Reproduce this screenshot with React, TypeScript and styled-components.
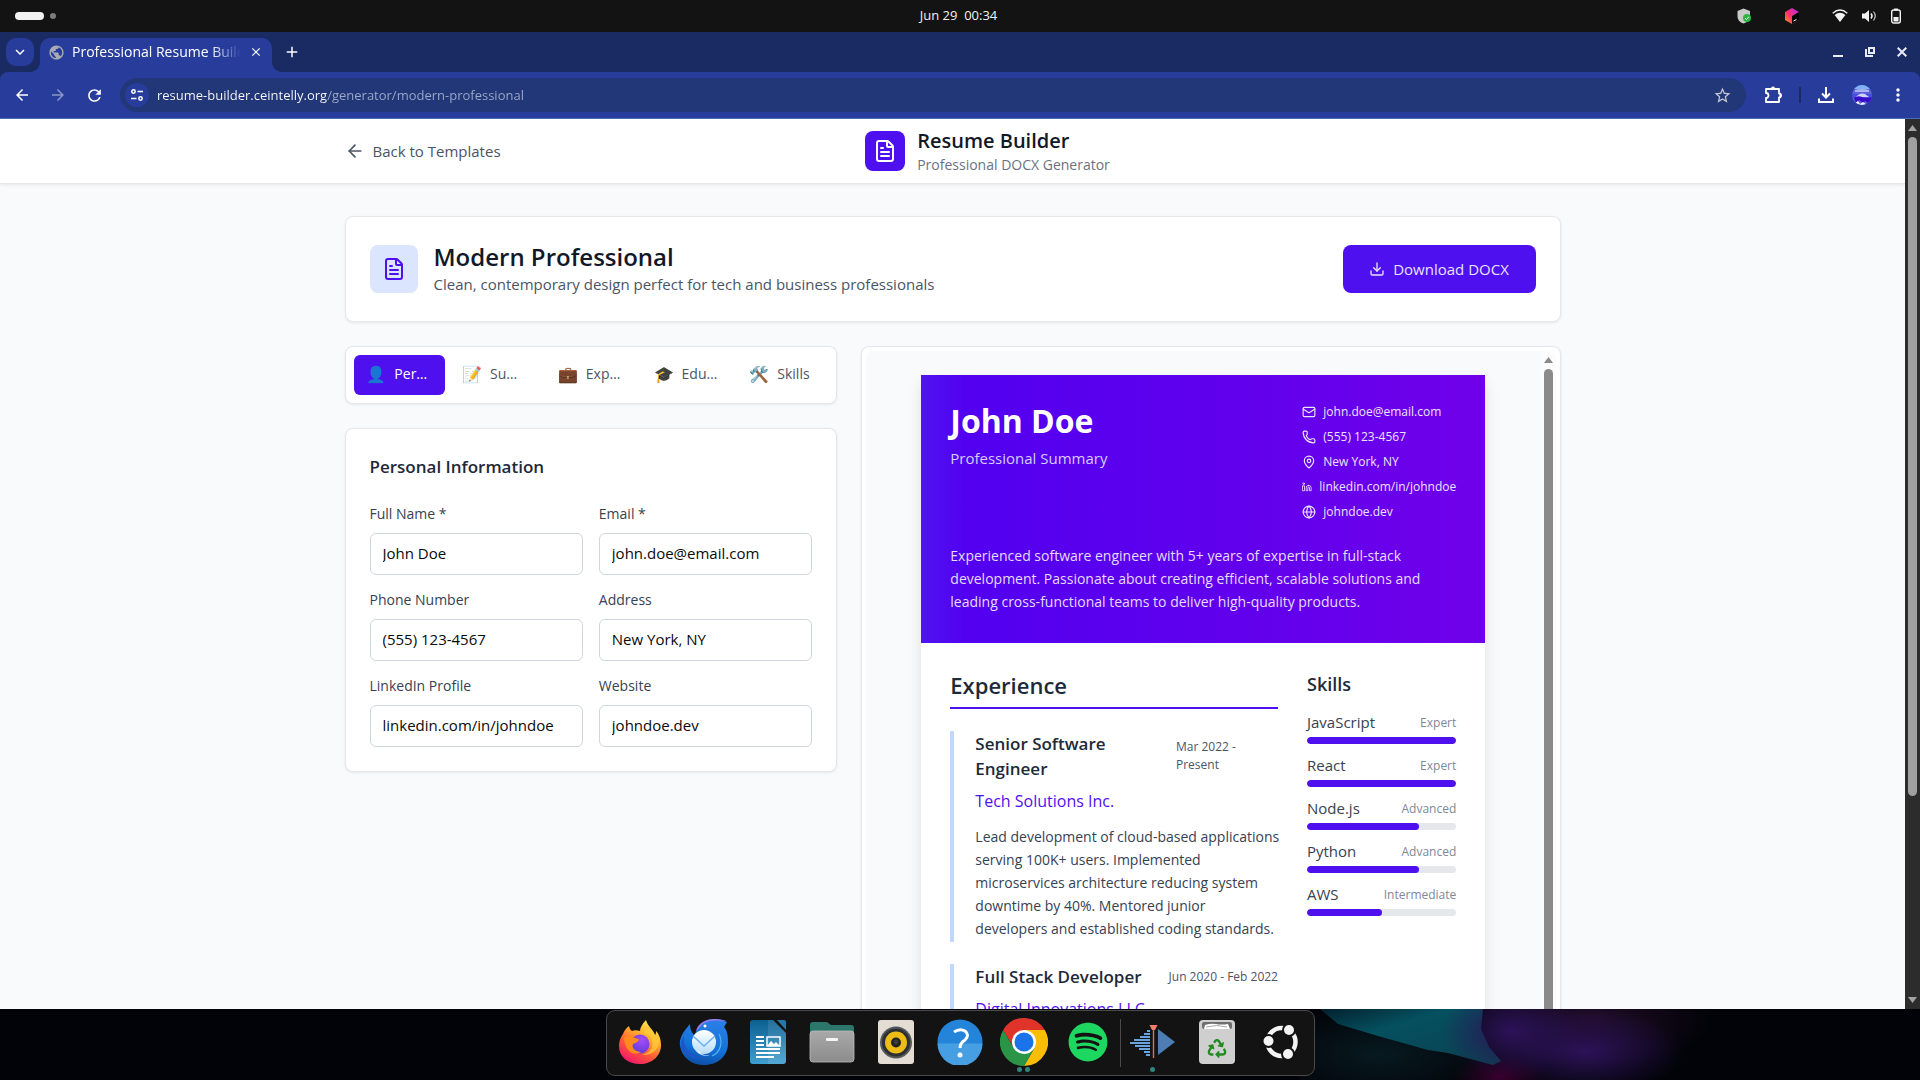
import React, { useState } from "react";
import styled, { createGlobalStyle } from "styled-components";
import { ArrowLeft, Download, FileText, Globe, Linkedin, Mail, MapPin, Phone } from "lucide-react";
import {
  MdAdd,
  MdArrowBack,
  MdArrowForward,
  MdClose,
  MdKeyboardArrowDown,
  MdMoreVert,
  MdOutlineExtension,
  MdPublic,
  MdRefresh,
  MdStarBorder,
} from "react-icons/md";
import { FaRecycle, FaSpotify } from "react-icons/fa";

const c = {
  primary: "#4f10f0",
  ink: "#111827",
  heading: "#1e2939",
  body: "#364153",
  muted: "#4a5565",
  faint: "#6a7282",
  line: "#e5e7eb",
  page: "#f9fafc",
  chrome: "#283d9b",
  strip: "#1a2a63",
};

const GlobalStyle = createGlobalStyle`
  *, *::before, *::after { box-sizing: border-box; }
  body { margin: 0; font-family: "Open Sans", "Noto Sans", sans-serif; background: #000; }
  h1, h2, h3, h4, p, ul { margin: 0; padding: 0; }
  ul { list-style: none; }
  button, input { font: inherit; color: inherit; }
  button { border: 0; padding: 0; background: none; cursor: pointer; }
  svg { display: block; flex-shrink: 0; }
`;

const Desktop = styled.div`
  height: 100vh;
  display: flex;
  flex-direction: column;
  overflow: hidden;
`;

/* ---------- system bar ---------- */
const SystemBar = styled.header`
  flex: none;
  height: 32px;
  padding: 0 18px 0 15px;
  background: #131313;
  color: #f2f2f2;
  display: grid;
  grid-template-columns: 1fr auto 1fr;
  align-items: center;
`;
const Workspaces = styled.div`
  display: flex;
  align-items: center;
  gap: 6px;
`;
const WorkspaceDot = styled.span<{ $active?: boolean }>`
  width: ${(p) => (p.$active ? 29 : 6)}px;
  height: ${(p) => (p.$active ? 8 : 6)}px;
  border-radius: 4px;
  background: ${(p) => (p.$active ? "#f2f2f2" : "#7d7d7d")};
`;
const Clock = styled.time`
  font-size: 13px;
  line-height: 20px;
  padding-bottom: 2px;
  white-space: pre;
`;
const Tray = styled.div`
  display: flex;
  justify-content: flex-end;
  align-items: center;
`;
const TrayGroup = styled.div<{ $gap: number }>`
  display: flex;
  align-items: center;
  gap: ${(p) => p.$gap}px;
  margin-left: 32px;
`;

/* ---------- browser frame ---------- */
const TabStrip = styled.div`
  flex: none;
  height: 40px;
  background: ${c.strip};
  color: #fff;
  padding: 6px 10px 0 6px;
  display: flex;
  align-items: flex-start;
`;
const TabSearch = styled.button`
  width: 28px;
  height: 28px;
  border-radius: 10px;
  background: ${c.chrome};
  display: grid;
  place-items: center;
`;
const BrowserTab = styled.div`
  position: relative;
  width: 232px;
  height: 34px;
  margin-left: 6px;
  padding: 0 8px 6px 8px;
  border-radius: 10px 10px 0 0;
  background: ${c.chrome};
  display: flex;
  align-items: center;
  gap: 7px;
  &::before,
  &::after {
    content: "";
    position: absolute;
    bottom: 0;
    width: 10px;
    height: 10px;
  }
  &::before {
    left: -10px;
    background: radial-gradient(circle at 0 0, transparent 10px, ${c.chrome} 10px);
  }
  &::after {
    right: -10px;
    background: radial-gradient(circle at 100% 0, transparent 10px, ${c.chrome} 10px);
  }
`;
const TabTitle = styled.span`
  flex: 1;
  font-size: 14px;
  line-height: 20px;
  white-space: nowrap;
  overflow: hidden;
  mask-image: linear-gradient(90deg, #000 82%, transparent 100%);
`;
const NewTab = styled.button`
  width: 28px;
  height: 28px;
  margin-left: 6px;
  display: grid;
  place-items: center;
`;
const WindowButtons = styled.div`
  margin-left: auto;
  height: 28px;
  display: flex;
  align-items: center;
  gap: 16px;
`;
const IconButton = styled.button<{ $size?: number }>`
  width: ${(p) => p.$size ?? 20}px;
  height: ${(p) => p.$size ?? 20}px;
  display: grid;
  place-items: center;
`;
const ToolbarBack = styled.div`
  flex: none;
  background: ${c.strip};
`;
const Toolbar = styled.div`
  height: 47px;
  border-bottom: 1px solid #4a6db8;
  border-radius: 8px 8px 0 0;
  background: ${c.chrome};
  color: #fff;
  padding: 0 12px;
  display: flex;
  align-items: center;
`;
const NavButtons = styled.div`
  display: flex;
  gap: 16px;
  margin-right: 16px;
`;
const NavButton = styled(IconButton)<{ $dim?: boolean }>`
  opacity: ${(p) => (p.$dim ? 0.45 : 1)};
`;
const AddressBar = styled.form`
  flex: 1;
  height: 34px;
  border-radius: 17px;
  background: #223777;
  padding: 0 14px 0 5px;
  display: flex;
  align-items: center;
  gap: 8px;
`;
const SiteInfo = styled.button`
  width: 24px;
  height: 24px;
  border-radius: 12px;
  background: ${c.chrome};
  display: grid;
  place-items: center;
`;
const AddressInput = styled.input`
  flex: 1;
  min-width: 0;
  border: 0;
  outline: 0;
  padding: 0;
  font-size: 13px;
  line-height: 20px;
  color: #fff;
  background: linear-gradient(90deg, #fff 170px, #9fabcb 170px);
  background-clip: text;
  -webkit-text-fill-color: transparent;
`;
const ToolbarActions = styled.div`
  display: flex;
  align-items: center;
  gap: 16px;
  margin-left: 17px;
`;
const ToolbarDivider = styled.span`
  width: 2px;
  height: 16px;
  background: ${c.strip};
  margin-right: -1px;
`;

/* ---------- page ---------- */
const Viewport = styled.div`
  flex: 1;
  min-height: 0;
  display: flex;
  overflow: hidden;
`;
const Page = styled.div`
  flex: 1;
  min-width: 0;
  overflow: hidden;
  background: ${c.page};
`;
const PageRail = styled.div`
  width: 15px;
  background: #2c2c2c;
  color: #a3a3a3;
  display: flex;
  flex-direction: column;
  align-items: center;
  padding: 6px 0;
`;
const PageThumb = styled.div`
  width: 9px;
  height: 75%;
  margin: 6px 0 auto;
  border-radius: 5px;
  background: #a0a0a0;
`;
const Container = styled.div`
  max-width: 1280px;
  margin: 0 auto;
  padding: 0 32px;
`;
const SiteHeader = styled.header`
  background: #fff;
  border-bottom: 1px solid ${c.line};
  box-shadow: 0 1px 3px rgba(0, 0, 0, 0.08);
`;
const HeaderRow = styled(Container)`
  height: 64px;
  display: flex;
  align-items: center;
  justify-content: space-between;
`;
const BackLink = styled.a`
  display: flex;
  align-items: center;
  gap: 8px;
  min-width: 160px;
  color: ${c.muted};
  font-size: 15px;
  line-height: 24px;
  text-decoration: none;
  white-space: nowrap;
`;
const Brand = styled.div`
  display: flex;
  align-items: center;
  gap: 12px;
`;
const BrandMark = styled.span`
  width: 40px;
  height: 40px;
  border-radius: 8px;
  background: ${c.primary};
  color: #fff;
  display: grid;
  place-items: center;
`;
const BrandName = styled.h1`
  font-size: 20px;
  line-height: 28px;
  font-weight: 600;
  color: ${c.ink};
`;
const BrandTagline = styled.p`
  font-size: 14px;
  line-height: 20px;
  color: ${c.faint};
`;
const HeaderSpacer = styled.div`
  width: 90px;
`;
const Main = styled(Container).attrs({ as: "main" })`
  padding-top: 32px;
  display: flex;
  flex-direction: column;
  gap: 24px;
`;
const Card = styled.section`
  background: #fff;
  border: 1px solid ${c.line};
  border-radius: 8px;
  box-shadow: 0 1px 3px rgba(0, 0, 0, 0.08);
`;
const TemplateCard = styled(Card)`
  padding: 24px;
  display: flex;
  align-items: center;
  gap: 16px;
`;
const TemplateMark = styled.span`
  width: 48px;
  height: 48px;
  border-radius: 8px;
  background: #dbe6fe;
  color: ${c.primary};
  display: grid;
  place-items: center;
`;
const TemplateText = styled.div`
  flex: 1;
`;
const TemplateName = styled.h2`
  font-size: 24px;
  line-height: 30px;
  font-weight: 600;
  color: ${c.ink};
`;
const TemplateNote = styled.p`
  font-size: 15px;
  line-height: 24px;
  color: ${c.muted};
`;
const DownloadButton = styled.button`
  height: 48px;
  margin: 4px 0;
  min-width: 193px;
  padding: 0 24px;
  border-radius: 8px;
  background: ${c.primary};
  color: #e9e2fd;
  font-size: 15px;
  display: flex;
  align-items: center;
  justify-content: center;
  gap: 8px;
`;
const Columns = styled.div`
  display: grid;
  grid-template-columns: repeat(12, minmax(0, 1fr));
  column-gap: 24px;
  align-items: start;
`;
const EditorColumn = styled.div`
  grid-column: span 5;
  display: flex;
  flex-direction: column;
  gap: 24px;
`;
const SectionTabs = styled(Card).attrs({ as: "nav" })`
  padding: 8px;
  display: grid;
  grid-template-columns: repeat(5, minmax(0, 1fr));
  gap: 4px;
`;
const SectionTab = styled.button<{ $active: boolean }>`
  height: 40px;
  padding: 0 12px 2px;
  border-radius: 6px;
  background: ${(p) => (p.$active ? c.primary : "transparent")};
  color: ${(p) => (p.$active ? "#fff" : c.muted)};
  font-size: 14px;
  font-weight: 500;
  line-height: 20px;
  display: flex;
  align-items: center;
  justify-content: center;
  gap: 8px;
`;
const TabEmoji = styled.span`
  font-size: 16px;
`;
const TabLabel = styled.span`
  min-width: 38px;
  text-align: left;
  white-space: nowrap;
`;
const FormCard = styled(Card).attrs({ as: "form" })`
  padding: 24px;
`;
const FormTitle = styled.h3`
  font-size: 17px;
  line-height: 28px;
  font-weight: 600;
  color: ${c.heading};
  margin-bottom: 23px;
`;
const FieldGrid = styled.div`
  display: grid;
  grid-template-columns: 1fr 1fr;
  gap: 15px 16px;
`;
const Field = styled.div`
  display: flex;
  flex-direction: column;
  gap: 9px;
`;
const FieldLabel = styled.label`
  font-size: 14px;
  line-height: 20px;
  font-weight: 500;
  color: ${c.body};
`;
const FieldInput = styled.input`
  width: 100%;
  height: 42px;
  padding: 0 12px 2px;
  border: 1px solid #d1d5dc;
  border-radius: 6px;
  background: #fff;
  color: #0a0a0a;
  font-size: 15px;
`;

/* ---------- resume preview ---------- */
const PreviewCard = styled(Card)`
  grid-column: span 7;
  padding: 4px;
`;
const PreviewPanel = styled.div`
  display: flex;
  border-radius: 8px;
  background: ${c.page};
  overflow: hidden;
`;
const PreviewCanvas = styled.div`
  flex: 1;
  padding: 24px 0;
  display: flex;
  justify-content: center;
`;
const PreviewRail = styled.div`
  width: 15px;
  padding-top: 6px;
  background: #fcfcfc;
  color: #8b8b8b;
  display: flex;
  flex-direction: column;
  align-items: center;
  gap: 6px;
`;
const PreviewThumb = styled.div`
  flex: 1;
  width: 9px;
  border-radius: 5px;
  background: #8b8b8b;
`;
const Resume = styled.article`
  width: 564px;
  background: #fff;
  box-shadow: 0 8px 14px rgba(0, 0, 0, 0.1);
`;
const ResumeHeader = styled.header`
  padding: 28px 29px 30px;
  background: linear-gradient(90deg, #4f14f0 0%, #5200f0 8%, #6000ec 55%, #7000ea 100%);
  color: #fff;
`;
const ResumeTop = styled.div`
  display: flex;
  justify-content: space-between;
  margin-bottom: 23px;
`;
const ResumeName = styled.h1`
  font-size: 32px;
  line-height: 36px;
  font-weight: 700;
  margin-bottom: 7px;
`;
const ResumeRole = styled.p`
  font-size: 15px;
  line-height: 25px;
  color: #d6cdfd;
`;
const ContactList = styled.ul`
  width: 154px;
  display: flex;
  flex-direction: column;
  gap: 7px;
`;
const Contact = styled.li`
  display: flex;
  align-items: center;
  gap: 7px;
  font-size: 12px;
  line-height: 18px;
  white-space: nowrap;
  color: #ece4fe;
`;
const ResumeSummary = styled.p`
  font-size: 14px;
  line-height: 23px;
  color: #e6dcfd;
`;
const ResumeBody = styled.div`
  padding: 28px 29px;
  display: grid;
  grid-template-columns: repeat(3, minmax(0, 1fr));
  column-gap: 29px;
`;
const MainColumn = styled.section`
  grid-column: span 2;
`;
const SectionHeading = styled.h2`
  font-size: 22px;
  line-height: 29px;
  font-weight: 600;
  color: ${c.heading};
  padding-bottom: 7px;
  border-bottom: 2px solid ${c.primary};
  margin-bottom: 22px;
`;
const JobList = styled.div`
  display: flex;
  flex-direction: column;
  gap: 22px;
`;
const Job = styled.article`
  border-left: 4px solid #bed8ff;
  padding-left: 21px;
`;
const JobTop = styled.div`
  display: flex;
  align-items: center;
  justify-content: space-between;
  margin-bottom: 8px;
`;
const JobTitle = styled.h3`
  font-size: 17px;
  line-height: 25px;
  font-weight: 600;
  color: ${c.heading};
`;
const JobDates = styled.span<{ $narrow?: boolean }>`
  font-size: 12px;
  line-height: 18px;
  color: ${c.muted};
  ${(p) => (p.$narrow ? "flex: 0 0 102px;" : "white-space: nowrap;")}
`;
const JobCompany = styled.p`
  font-size: 16px;
  line-height: 25px;
  color: ${c.primary};
`;
const JobText = styled.p`
  margin: 11px -2px 0 0;
  padding-bottom: 2px;
  font-size: 14px;
  line-height: 23px;
  color: ${c.body};
`;
const SkillHeading = styled.h2`
  font-size: 18px;
  line-height: 26px;
  font-weight: 600;
  color: ${c.heading};
  margin-bottom: 15px;
`;
const SkillList = styled.ul`
  display: flex;
  flex-direction: column;
  gap: 11px;
`;
const SkillRow = styled.div`
  display: flex;
  align-items: center;
  justify-content: space-between;
  margin-bottom: 4px;
  line-height: 21px;
`;
const SkillName = styled.span`
  font-size: 15px;
  color: ${c.body};
`;
const SkillLevel = styled.span`
  font-size: 12px;
  color: #808896;
`;
const SkillTrack = styled.div`
  height: 7px;
  border-radius: 4px;
  background: ${c.line};
  overflow: hidden;
`;
const SkillFill = styled.div`
  height: 100%;
  border-radius: 4px;
  background: ${c.primary};
`;

/* ---------- dock ---------- */
const DockArea = styled.footer`
  position: relative;
  flex: none;
  height: 71px;
  background: #020308;
  display: flex;
  justify-content: center;
  align-items: flex-start;
  padding-top: 1px;
`;
const Wallpaper = styled.svg`
  position: absolute;
  top: 0;
  right: 0;
`;
const Dock = styled.div`
  position: relative;
  height: 66px;
  padding: 0 1px;
  border: 1px solid #4a4a4a;
  border-radius: 9px;
  background: #131313;
  display: flex;
  align-items: center;
`;
const DockButton = styled.button`
  position: relative;
  width: 64px;
  height: 64px;
  padding-bottom: 2px;
  display: grid;
  place-items: center;
`;
const DockDivider = styled.span`
  width: 1px;
  height: 48px;
  background: #4a4a4a;
`;
const RunningDots = styled.span`
  position: absolute;
  bottom: 3px;
  left: 0;
  right: 0;
  display: flex;
  justify-content: center;
  gap: 3px;
  i {
    width: 5px;
    height: 5px;
    border-radius: 3px;
    background: #2f8580;
  }
`;

const ScrollArrow = ({ down }: { down?: boolean }) => (
  <svg width="9" height="6" viewBox="0 0 9 6" fill="currentColor">
    <path d={down ? "M0 0h9L4.500 6z" : "M0 6h9L4.500 0z"} />
  </svg>
);

const ShieldIcon = () => (
  <svg width="16" height="16" viewBox="0 0 16 16">
    <path d="M7.500.500 14 3v5c0 4-3 6.500-6.500 7.500C4 14.500 1.500 12 1.500 8V3z" fill="#c9c9c9" />
    <circle cx="11" cy="10" r="4" fill="#2fb344" />
    <path d="m9 10 1.500 1.500L13 8.700" stroke="#e8ffe8" strokeWidth="1" fill="none" />
  </svg>
);
const ToolboxIcon = () => (
  <svg width="16" height="16" viewBox="0 0 16 16">
    <defs>
      <linearGradient id="tbx" x1="0" y1="1" x2="1" y2="0">
        <stop offset="0" stopColor="#ff9a1f" />
        <stop offset=".45" stopColor="#ff2f6d" />
        <stop offset="1" stopColor="#a82ff0" />
      </linearGradient>
    </defs>
    <path d="M8 0l7 4v8l-7 4-7-4V4z" fill="url(#tbx)" />
    <path d="M8 8l7-4v8l-7 4z" fill="#050505" />
    <path d="M9.500 13l3-1.500" stroke="#fff" strokeWidth="1" />
  </svg>
);
const WifiIcon = () => (
  <svg width="16" height="14" viewBox="0 0 16 14">
    <path d="M.7 4.300Q8-2.200 15.300 4.300" stroke="#f2f2f2" strokeWidth="1.300" fill="none" />
    <path d="M2.600 6Q8 1.500 13.400 6L8 13z" fill="#f2f2f2" />
  </svg>
);
const VolumeIcon = () => (
  <svg width="16" height="16" viewBox="0 0 16 16" fill="none" stroke="#f2f2f2">
    <path d="M1 5.500h3L8 2v12l-4-3.500H1z" fill="#f2f2f2" stroke="none" />
    <path d="M10 5.500q2 2.500 0 5" strokeWidth="1.500" />
    <path d="M12.500 3.500q3.500 4.500 0 9" strokeWidth="1.200" opacity=".8" />
  </svg>
);
const BatteryIcon = () => (
  <svg width="12" height="16" viewBox="0 0 12 16">
    <path d="M4 .5h4v2H4z" fill="#f2f2f2" />
    <rect x="1.700" y="2" width="8.600" height="13" rx="2" fill="none" stroke="#f2f2f2" strokeWidth="1.400" />
    <path d="M3.500 9h5v4.500h-5z" fill="#f2f2f2" />
  </svg>
);
const TuneIcon = () => (
  <svg width="14" height="14" viewBox="0 0 14 14" fill="none" stroke="#fff" strokeWidth="1.500">
    <circle cx="3.500" cy="3.500" r="1.700" />
    <path d="M7.500 3.500H13M1 10.500h5.500" />
    <circle cx="10.500" cy="10.500" r="1.700" />
  </svg>
);
const PuzzleIcon = () => (
  <svg width="20" height="20" viewBox="0 0 20 20" fill="none" stroke="#fff" strokeWidth="1.800" strokeLinejoin="round">
    <path d="M3 4h13v4.500a2 2 0 0 1 0 4V17H3v-4a2.300 2.300 0 0 0 0-5z" />
    <path d="M8 3.500a2 2 0 0 1 4 0z" fill="#fff" stroke="none" />
    <path d="M16.500 8.500a2 2 0 0 1 0 4z" fill="#fff" stroke="none" />
  </svg>
);
const TrayDownloadIcon = () => (
  <svg width="16" height="16" viewBox="0 0 16 16" fill="none" stroke="#fff" strokeWidth="2">
    <path d="M8 0v10M4 6.500l4 4 4-4M1 11.500V15h14v-3.500" />
  </svg>
);
const AvatarIcon = () => (
  <svg width="20" height="20" viewBox="0 0 20 20">
    <defs>
      <clipPath id="avc">
        <circle cx="10" cy="10" r="10" />
      </clipPath>
    </defs>
    <g clipPath="url(#avc)">
      <path d="M0 0h20v20H0z" fill="#5b62dc" />
      <path d="M0 0h20v4H0z" fill="#7db3f5" />
      <path d="M3 5q7-2 14 0v2H3z" fill="#a9b4f2" />
      <path d="M0 9h20v4H0z" fill="#4a4be0" />
      <path d="M4 12q4-5 9-3l4 3z" fill="#cfd2fa" />
      <path d="M2 13q4-3 8-1t10 0v4l-4 2-3-2-2 2-4-3-3 3z" fill="#3a0ccc" />
      <path d="M0 14l3 4 3-2 2 3 3-2 4 3H0z" fill="#f0f0ff" />
    </g>
  </svg>
);

const FirefoxIcon = () => (
  <svg width="44" height="46" viewBox="0 0 44 46">
    <defs>
      <linearGradient id="fxa" x1=".8" y1="0" x2=".25" y2="1">
        <stop offset="0" stopColor="#fff44f" />
        <stop offset=".35" stopColor="#ffb02e" />
        <stop offset=".65" stopColor="#ff5a36" />
        <stop offset="1" stopColor="#f0136f" />
      </linearGradient>
      <radialGradient id="fxb" cx=".6" cy=".3" r=".8">
        <stop offset="0" stopColor="#a44cf5" />
        <stop offset="1" stopColor="#5a3ad6" />
      </radialGradient>
    </defs>
    <path
      d="M28 1c-4 4-6 8-6 11-3-1-6-1-8 0-2-1-3-4-3-5-3 2-5 5-6 8-3 4-4 8-4 12 0 11 9 18 21 18s21-8 21-19c0-6-2-11-5-14 0 2 0 3-1 4-2-6-7-8-9-15z"
      fill="url(#fxa)"
    />
    <circle cx="22" cy="25" r="9.500" fill="url(#fxb)" />
    <path d="M6 19c4-3 8-2 11 0 3 1 4 1 4 2-1 2-4 3-6 4-2 4 3 8 8 8-6 4-16 1-17-14z" fill="#ff8a1e" />
    <path d="M26 14c7 1 10 8 8 14-2 5-6 7-10 8 9 1 17-5 17-14 0-3-1-6-2-8 0 2 0 3-1 4-2-5-6-8-8-12-2 2-4 5-4 8z" fill="#ffc93c" opacity=".75" />
  </svg>
);
const ThunderbirdIcon = () => (
  <svg width="50" height="48" viewBox="0 0 50 48">
    <defs>
      <linearGradient id="tba" x1=".6" y1="0" x2=".4" y2="1">
        <stop offset="0" stopColor="#2c7fe6" />
        <stop offset=".6" stopColor="#1373d9" />
        <stop offset="1" stopColor="#0d4fa8" />
      </linearGradient>
      <linearGradient id="tbb" x1="0" y1="0" x2="0" y2="1">
        <stop offset="0" stopColor="#fff" />
        <stop offset="1" stopColor="#b7dcfb" />
      </linearGradient>
    </defs>
    <path d="M11 6C4 14 0 20 1 28c2 12 12 19 24 19 14 0 24-9 24-22 0-8-1-13-4-16l3-5C40 0 30 0 24 4c-4 3-6 6-7 10l-2 3c-3-3-4-7-4-11z" fill="url(#tba)" />
    <path d="M17 13c2-8 10-12 19-12 5 0 9 1 11 2-9-1-17-1-22 2-3 2-5 6-8 8z" fill="#9a7bf0" />
    <path d="M5 18c-1 14 8 20 18 22-10 2-20-4-21-12 0-4 1-7 3-10z" fill="#1d57c7" />
    <circle cx="25" cy="24" r="12" fill="url(#tbb)" />
    <path d="M14 18l11 10 11-10" fill="none" stroke="#6aaef0" strokeWidth="1.400" />
    <path d="M17 33c3 4 8 5 14 5-7-1-9-2-10-5z" fill="#d8ecfd" />
    <circle cx="26" cy="8" r="1.500" fill="#fff" />
    <path d="M40 16c4 8 2 18-7 22" stroke="#53b1f5" strokeWidth="1.200" fill="none" />
  </svg>
);
const WriterIcon = () => (
  <svg width="38" height="46" viewBox="0 0 38 46">
    <defs>
      <linearGradient id="wra" x1="0" y1="0" x2="0" y2="1">
        <stop offset="0" stopColor="#0c6090" />
        <stop offset="1" stopColor="#3f9fd0" />
      </linearGradient>
    </defs>
    <path d="M4 1h20l13 13v28a3 3 0 0 1-3 3H4a3 3 0 0 1-3-3V4a3 3 0 0 1 3-3z" fill="url(#wra)" />
    <path d="M19 1h5l13 13v28a3 3 0 0 1-3 3H19z" fill="#fff" opacity=".1" />
    <path d="M28 1h7a2 2 0 0 1 2 2v8z" fill="#2578a8" />
    <g fill="#fff">
      <path d="M7 17h8v2H7zM7 21h8v2H7zM7 25h8v2H7zM7 29h24v2H7zM7 33h24v2H7zM7 37h18v2H7z" />
    </g>
    <rect x="18" y="18" width="13" height="9" fill="none" stroke="#fff" strokeWidth="1.500" />
    <path d="M18 27l4-5 3 3 2-2 4 4z" fill="#fff" />
  </svg>
);
const FilesIcon = () => (
  <svg width="46" height="42" viewBox="0 0 46 42">
    <defs>
      <linearGradient id="fla" x1="0" y1="0" x2="0" y2="1">
        <stop offset="0" stopColor="#a9a9a9" />
        <stop offset="1" stopColor="#8c8c8c" />
      </linearGradient>
    </defs>
    <path d="M4 1h14l4 3h20a3 3 0 0 1 3 3v14H1V4a3 3 0 0 1 3-3z" fill="#2d766b" />
    <path d="M4 10h38a3 3 0 0 1 3 3v25a3 3 0 0 1-3 3H4a3 3 0 0 1-3-3V13a3 3 0 0 1 3-3z" fill="url(#fla)" stroke="#bdbdbd" strokeWidth=".8" />
    <rect x="17" y="17" width="12" height="3" rx="1" fill="#f4f4f4" />
  </svg>
);
const SpeakerIcon = () => (
  <svg width="38" height="46" viewBox="0 0 38 46">
    <rect x="1" y="1" width="36" height="44" rx="3" fill="#e3ddd3" />
    <circle cx="19" cy="23.500" r="16" fill="#55585c" />
    <circle cx="19" cy="23.500" r="14" fill="#2d3033" />
    <circle cx="19" cy="23.500" r="11" fill="#eebc17" />
    <circle cx="19" cy="23.500" r="5" fill="#222" />
    <circle cx="19" cy="23" r="2.500" fill="#3b3b3b" />
  </svg>
);
const HelpIcon = () => (
  <svg width="46" height="46" viewBox="0 0 46 46">
    <circle cx="23" cy="23" r="22.500" fill="#2484da" />
    <path d="M.5 24.500h45A22.500 22.500 0 0 1 .5 24.500z" fill="#459fe2" />
    <path d="M17 13q6-4 11-1 5 4 0 9-5 3-5 8" fill="none" stroke="#fff" strokeWidth="3" />
    <circle cx="23" cy="36" r="2.500" fill="#fff" />
  </svg>
);
const ChromeIcon = () => (
  <svg width="48" height="48" viewBox="0 0 48 48">
    <path d="M24 12h20.800A24 24 0 0 1 24 48l10.400-18z" fill="#fbbc04" />
    <path d="M3.200 12A24 24 0 0 1 44.800 12H24L13.600 30z" fill="#e0342a" />
    <path d="M3.200 12l10.400 18L24 24l10.400 6L24 48A24 24 0 0 1 3.200 12z" fill="#2a9547" />
    <circle cx="24" cy="24" r="12" fill="#fff" />
    <circle cx="24" cy="24" r="9.500" fill="#1a73e8" />
  </svg>
);
const AudioEditIcon = () => (
  <svg width="46" height="36" viewBox="0 0 46 36">
    <g fill="#68a5e0">
      <path d="M17 6h3v2h-3zM14 9h6v2h-6zM10 12h10v2H10zM4 15h16v2H4zM0 18h20v2H0zM5 21h15v2H5zM9 24h11v2H9zM14 27h6v2h-6zM16 30h4v2h-4z" />
    </g>
    <path d="M28 5l17 13-17 13z" fill="#4d7db5" />
    <path d="M23.500 2v32" stroke="#d9705f" strokeWidth="1.400" />
    <path d="M19.500 1h8l-2.500 5h-3z" fill="#ef7f6d" />
  </svg>
);
const TrashIcon = () => (
  <svg width="38" height="46" viewBox="0 0 38 46">
    <rect x="1" y="1" width="36" height="44" rx="4" fill="#cfcfcf" />
    <rect x="4" y="3" width="30" height="7" rx="2" fill="#6e6e6e" />
    <path d="M6 10l1-4q6-2 11-1t12 0l2 5z" fill="#fff" />
    <path d="M8 8q11-3 21 0" stroke="#aaa" fill="none" />
    <g transform="translate(9.500 20)">
      <FaRecycle size={19} color="#238a22" />
    </g>
  </svg>
);
const UbuntuIcon = () => (
  <svg width="38" height="38" viewBox="0 0 38 38">
    <circle cx="19.500" cy="19" r="14" fill="none" stroke="#f4f4f4" strokeWidth="4.500" />
    <g fill="#f4f4f4" stroke="#131313" strokeWidth="2">
      <circle cx="6.500" cy="18" r="6" />
      <circle cx="27" cy="7" r="6" />
      <circle cx="26" cy="31" r="6" />
    </g>
  </svg>
);

const fields = [
  { id: "name", label: "Full Name *", value: "John Doe", type: "text" },
  { id: "email", label: "Email *", value: "john.doe@email.com", type: "email" },
  { id: "phone", label: "Phone Number", value: "(555) 123-4567", type: "tel" },
  { id: "address", label: "Address", value: "New York, NY", type: "text" },
  { id: "linkedin", label: "LinkedIn Profile", value: "linkedin.com/in/johndoe", type: "text" },
  { id: "website", label: "Website", value: "johndoe.dev", type: "text" },
];
const tabs = [
  { icon: "👤", label: "Per…" },
  { icon: "📝", label: "Su…" },
  { icon: "💼", label: "Exp…" },
  { icon: "🎓", label: "Edu…" },
  { icon: "🛠️", label: "Skills" },
];
const skills = [
  { name: "JavaScript", level: "Expert", value: 100 },
  { name: "React", level: "Expert", value: 100 },
  { name: "Node.js", level: "Advanced", value: 75 },
  { name: "Python", level: "Advanced", value: 75 },
  { name: "AWS", level: "Intermediate", value: 50 },
];

export default function App() {
  const [active, setActive] = useState(0);
  const [values, setValues] = useState<Record<string, string>>(
    Object.fromEntries(fields.map((f) => [f.id, f.value]))
  );
  const contacts = [
    { Icon: Mail, size: 14, text: values.email },
    { Icon: Phone, size: 14, text: values.phone },
    { Icon: MapPin, size: 14, text: values.address },
    { Icon: Linkedin, size: 10, text: values.linkedin },
    { Icon: Globe, size: 14, text: values.website },
  ];

  return (
    <Desktop>
      <GlobalStyle />
      <SystemBar>
        <Workspaces>
          <WorkspaceDot $active />
          <WorkspaceDot />
        </Workspaces>
        <Clock>{"Jun 29  00:34"}</Clock>
        <Tray>
          <TrayGroup $gap={32}>
            <ShieldIcon />
            <ToolboxIcon />
          </TrayGroup>
          <TrayGroup $gap={13}>
            <WifiIcon />
            <VolumeIcon />
            <BatteryIcon />
          </TrayGroup>
        </Tray>
      </SystemBar>

      <TabStrip>
        <TabSearch aria-label="Search tabs">
          <MdKeyboardArrowDown size={18} />
        </TabSearch>
        <BrowserTab>
          <MdPublic size={17} color="#a9abb3" />
          <TabTitle>Professional Resume Builder</TabTitle>
          <IconButton $size={16} aria-label="Close tab">
            <MdClose size={14} />
          </IconButton>
        </BrowserTab>
        <NewTab aria-label="New tab">
          <MdAdd size={18} />
        </NewTab>
        <WindowButtons>
          <IconButton $size={16} aria-label="Minimize">
            <svg width="10" height="10" viewBox="0 0 10 10">
              <path d="M0 8h10v2H0z" fill="#e8eaf5" />
            </svg>
          </IconButton>
          <IconButton $size={16} aria-label="Restore">
            <svg width="10" height="10" viewBox="0 0 10 10" fill="none" stroke="#e8eaf5" strokeWidth="2">
              <path d="M4 1h5v5H4z" />
              <path d="M1 2v7h7" />
            </svg>
          </IconButton>
          <IconButton $size={16} aria-label="Close window">
            <svg width="10" height="10" viewBox="0 0 10 10" stroke="#e8eaf5" strokeWidth="2">
              <path d="M.7.7l8.600 8.600M9.300.7L.7 9.300" />
            </svg>
          </IconButton>
        </WindowButtons>
      </TabStrip>

      <ToolbarBack>
        <Toolbar>
          <NavButtons>
            <NavButton aria-label="Back">
              <MdArrowBack size={18} />
            </NavButton>
            <NavButton $dim aria-label="Forward">
              <MdArrowForward size={18} />
            </NavButton>
            <NavButton aria-label="Reload">
              <MdRefresh size={19} />
            </NavButton>
          </NavButtons>
          <AddressBar onSubmit={(e) => e.preventDefault()}>
            <SiteInfo type="button" aria-label="Site information">
              <TuneIcon />
            </SiteInfo>
            <AddressInput
              aria-label="Address"
              defaultValue="resume-builder.ceintelly.org/generator/modern-professional"
            />
            <IconButton type="button" aria-label="Bookmark">
              <MdStarBorder size={19} color="#c3c6d2" />
            </IconButton>
          </AddressBar>
          <ToolbarActions>
            <IconButton aria-label="Extensions">
              <PuzzleIcon />
            </IconButton>
            <ToolbarDivider />
            <IconButton aria-label="Downloads">
              <TrayDownloadIcon />
            </IconButton>
            <IconButton aria-label="Profile">
              <AvatarIcon />
            </IconButton>
            <IconButton aria-label="Menu">
              <MdMoreVert size={20} />
            </IconButton>
          </ToolbarActions>
        </Toolbar>
      </ToolbarBack>

      <Viewport>
        <Page>
          <SiteHeader>
            <HeaderRow>
              <BackLink href="#templates">
                <ArrowLeft size={20} />
                Back to Templates
              </BackLink>
              <Brand>
                <BrandMark>
                  <FileText size={24} />
                </BrandMark>
                <div>
                  <BrandName>Resume Builder</BrandName>
                  <BrandTagline>Professional DOCX Generator</BrandTagline>
                </div>
              </Brand>
              <HeaderSpacer />
            </HeaderRow>
          </SiteHeader>

          <Main>
            <TemplateCard>
              <TemplateMark>
                <FileText size={24} />
              </TemplateMark>
              <TemplateText>
                <TemplateName>Modern Professional</TemplateName>
                <TemplateNote>Clean, contemporary design perfect for tech and business professionals</TemplateNote>
              </TemplateText>
              <DownloadButton>
                <Download size={16} />
                Download DOCX
              </DownloadButton>
            </TemplateCard>

            <Columns>
              <EditorColumn>
                <SectionTabs>
                  {tabs.map((t, i) => (
                    <SectionTab key={t.label} $active={i === active} onClick={() => setActive(i)}>
                      <TabEmoji>{t.icon}</TabEmoji>
                      <TabLabel>{t.label}</TabLabel>
                    </SectionTab>
                  ))}
                </SectionTabs>
                <FormCard>
                  <FormTitle>Personal Information</FormTitle>
                  <FieldGrid>
                    {fields.map((f) => (
                      <Field key={f.id}>
                        <FieldLabel htmlFor={f.id}>{f.label}</FieldLabel>
                        <FieldInput
                          id={f.id}
                          type={f.type}
                          value={values[f.id]}
                          onChange={(e) => setValues({ ...values, [f.id]: e.target.value })}
                        />
                      </Field>
                    ))}
                  </FieldGrid>
                </FormCard>
              </EditorColumn>

              <PreviewCard>
                <PreviewPanel>
                  <PreviewCanvas>
                    <Resume>
                      <ResumeHeader>
                        <ResumeTop>
                          <div>
                            <ResumeName>{values.name}</ResumeName>
                            <ResumeRole>Professional Summary</ResumeRole>
                          </div>
                          <ContactList>
                            {contacts.map(({ Icon, size, text }, i) => (
                              <Contact key={i}>
                                <Icon size={size} />
                                {text}
                              </Contact>
                            ))}
                          </ContactList>
                        </ResumeTop>
                        <ResumeSummary>
                          Experienced software engineer with 5+ years of expertise in full-stack development.
                          Passionate about creating efficient, scalable solutions and leading cross-functional
                          teams to deliver high-quality products.
                        </ResumeSummary>
                      </ResumeHeader>
                      <ResumeBody>
                        <MainColumn>
                          <SectionHeading>Experience</SectionHeading>
                          <JobList>
                            <Job>
                              <JobTop>
                                <JobTitle>Senior Software Engineer</JobTitle>
                                <JobDates $narrow>Mar 2022 - Present</JobDates>
                              </JobTop>
                              <JobCompany>Tech Solutions Inc.</JobCompany>
                              <JobText>
                                Lead development of cloud-based applications serving 100K+ users. Implemented
                                microservices architecture reducing system downtime by 40%. Mentored junior
                                developers and established coding standards.
                              </JobText>
                            </Job>
                            <Job>
                              <JobTop>
                                <JobTitle>Full Stack Developer</JobTitle>
                                <JobDates>Jun 2020 - Feb 2022</JobDates>
                              </JobTop>
                              <JobCompany>Digital Innovations LLC</JobCompany>
                            </Job>
                          </JobList>
                        </MainColumn>
                        <section>
                          <SkillHeading>Skills</SkillHeading>
                          <SkillList>
                            {skills.map((s) => (
                              <li key={s.name}>
                                <SkillRow>
                                  <SkillName>{s.name}</SkillName>
                                  <SkillLevel>{s.level}</SkillLevel>
                                </SkillRow>
                                <SkillTrack>
                                  <SkillFill style={{ width: `${s.value}%` }} />
                                </SkillTrack>
                              </li>
                            ))}
                          </SkillList>
                        </section>
                      </ResumeBody>
                    </Resume>
                  </PreviewCanvas>
                  <PreviewRail>
                    <ScrollArrow />
                    <PreviewThumb />
                  </PreviewRail>
                </PreviewPanel>
              </PreviewCard>
            </Columns>
          </Main>
        </Page>
        <PageRail>
          <ScrollArrow />
          <PageThumb />
          <ScrollArrow down />
        </PageRail>
      </Viewport>

      <DockArea>
        <Wallpaper width="620" height="71" viewBox="0 0 620 71">
          <defs>
            <linearGradient id="wpt" x1="0" y1="0" x2="1" y2="1">
              <stop offset="0" stopColor="#02202c" />
              <stop offset=".35" stopColor="#05505f" />
              <stop offset="1" stopColor="#0c4050" />
            </linearGradient>
            <radialGradient id="wpp">
              <stop offset="0" stopColor="#2c1258" />
              <stop offset="1" stopColor="#2c1258" stopOpacity="0" />
            </radialGradient>
            <radialGradient id="wpm">
              <stop offset="0" stopColor="#3a0030" />
              <stop offset="1" stopColor="#3a0030" stopOpacity="0" />
            </radialGradient>
            <radialGradient id="wpd">
              <stop offset="0" stopColor="#200c26" />
              <stop offset="1" stopColor="#200c26" stopOpacity="0" />
            </radialGradient>
            <radialGradient id="wpg">
              <stop offset="0" stopColor="#071a20" />
              <stop offset="1" stopColor="#071a20" stopOpacity="0" />
            </radialGradient>
          </defs>
          <ellipse cx="80" cy="45" rx="130" ry="50" fill="url(#wpg)" />
          <ellipse cx="290" cy="10" rx="120" ry="50" fill="url(#wpd)" />
          <ellipse cx="285" cy="42" rx="100" ry="44" fill="url(#wpp)" />
          <ellipse cx="200" cy="68" rx="45" ry="24" fill="url(#wpm)" />
          <path d="M20 0h163l-2 20 8 18 12 14-8 4-45-12-20-3-50-14-40-12z" fill="url(#wpt)" />
          <ellipse cx="212" cy="22" rx="70" ry="46" fill="url(#wpp)" />
        </Wallpaper>
        <Dock>
          <DockButton aria-label="Firefox">
            <FirefoxIcon />
          </DockButton>
          <DockButton aria-label="Thunderbird">
            <ThunderbirdIcon />
          </DockButton>
          <DockButton aria-label="Writer">
            <WriterIcon />
          </DockButton>
          <DockButton aria-label="Files">
            <FilesIcon />
          </DockButton>
          <DockButton aria-label="Music">
            <SpeakerIcon />
          </DockButton>
          <DockButton aria-label="Help">
            <HelpIcon />
          </DockButton>
          <DockButton aria-label="Chrome">
            <ChromeIcon />
            <RunningDots>
              <i />
              <i />
            </RunningDots>
          </DockButton>
          <DockButton aria-label="Spotify">
            <FaSpotify size={40} color="#1ed760" />
          </DockButton>
          <DockDivider />
          <DockButton aria-label="Audio editor">
            <AudioEditIcon />
            <RunningDots>
              <i />
            </RunningDots>
          </DockButton>
          <DockButton aria-label="Trash">
            <TrashIcon />
          </DockButton>
          <DockButton aria-label="Show apps">
            <UbuntuIcon />
          </DockButton>
        </Dock>
      </DockArea>
    </Desktop>
  );
}
